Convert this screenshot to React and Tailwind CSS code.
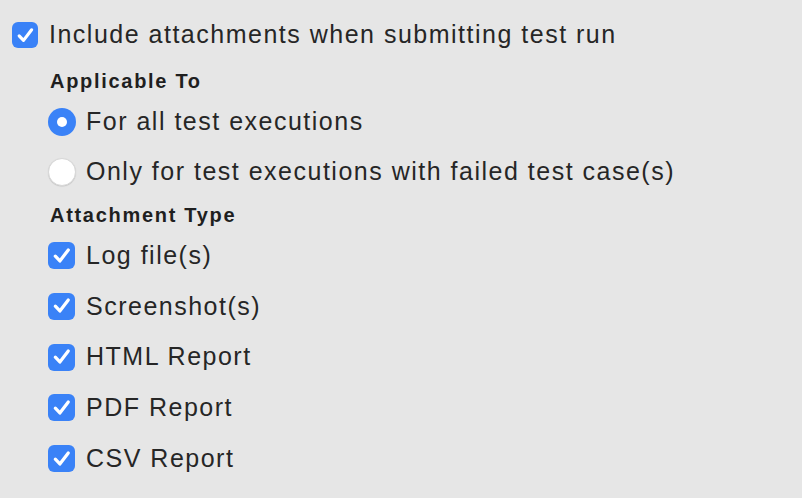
const font = { fontFamily: '"Liberation Sans", Arial, sans-serif' };

const Check = ({ size = 'w-[27px] h-[27px]' }) => (
  <span className={`${size} shrink-0 rounded-[6px] bg-[#3a82f7] flex items-center justify-center`}>
    <svg viewBox="0 0 20 20" className="w-[80%] h-[80%]" fill="none">
      <path d="M4 10.4 L8.2 14.8 L16 4.6" stroke="white" strokeWidth="3" strokeLinecap="round" strokeLinejoin="round" />
    </svg>
  </span>
);

const Radio = ({ on }) =>
  on ? (
    <span className="w-[28px] h-[28px] shrink-0 rounded-full bg-[#3a82f7] flex items-center justify-center">
      <span className="w-[10px] h-[10px] rounded-full bg-white" />
    </span>
  ) : (
    <span className="w-[28px] h-[28px] shrink-0 rounded-full bg-white border border-[#d8d8d8] shadow-[0_0.5px_1px_rgba(0,0,0,0.15)]" />
  );

const attachments = ['Log file(s)', 'Screenshot(s)', 'HTML Report', 'PDF Report', 'CSV Report'];

export default function App() {
  return (
    <div className="w-[802px] h-[498px] bg-[#e6e6e6] text-[#262626] overflow-hidden" style={font}>
      <div className="pl-[12px] pt-[22px] flex flex-col">
        <label className="flex items-center h-[26px] gap-[11px]">
          <Check size="w-[26px] h-[26px]" />
          <span className="text-[25px] tracking-[1.5px]">Include attachments when submitting test run</span>
        </label>

        <div className="pl-[38px] mt-[23px] h-[20px] flex items-center text-[20px] tracking-[1.7px] font-bold text-[#1f1f1f]">
          Applicable To
        </div>

        <label className="pl-[36px] mt-[17px] h-[28px] flex items-center gap-[10px]">
          <Radio on />
          <span className="text-[25px] tracking-[1.5px]">For all test executions</span>
        </label>
        <label className="pl-[36px] mt-[22px] h-[28px] flex items-center gap-[10px]">
          <Radio />
          <span className="text-[25px] tracking-[1.5px]">Only for test executions with failed test case(s)</span>
        </label>

        <div className="pl-[38px] mt-[19px] h-[20px] flex items-center text-[20px] tracking-[1.7px] font-bold text-[#1f1f1f]">
          Attachment Type
        </div>

        <div className="pl-[36px] mt-[17px] flex flex-col gap-[23.75px]">
          {attachments.map((a) => (
            <label key={a} className="h-[27px] flex items-center gap-[11px]">
              <Check />
              <span className="text-[25px] tracking-[1.5px]">{a}</span>
            </label>
          ))}
        </div>
      </div>
    </div>
  );
}
